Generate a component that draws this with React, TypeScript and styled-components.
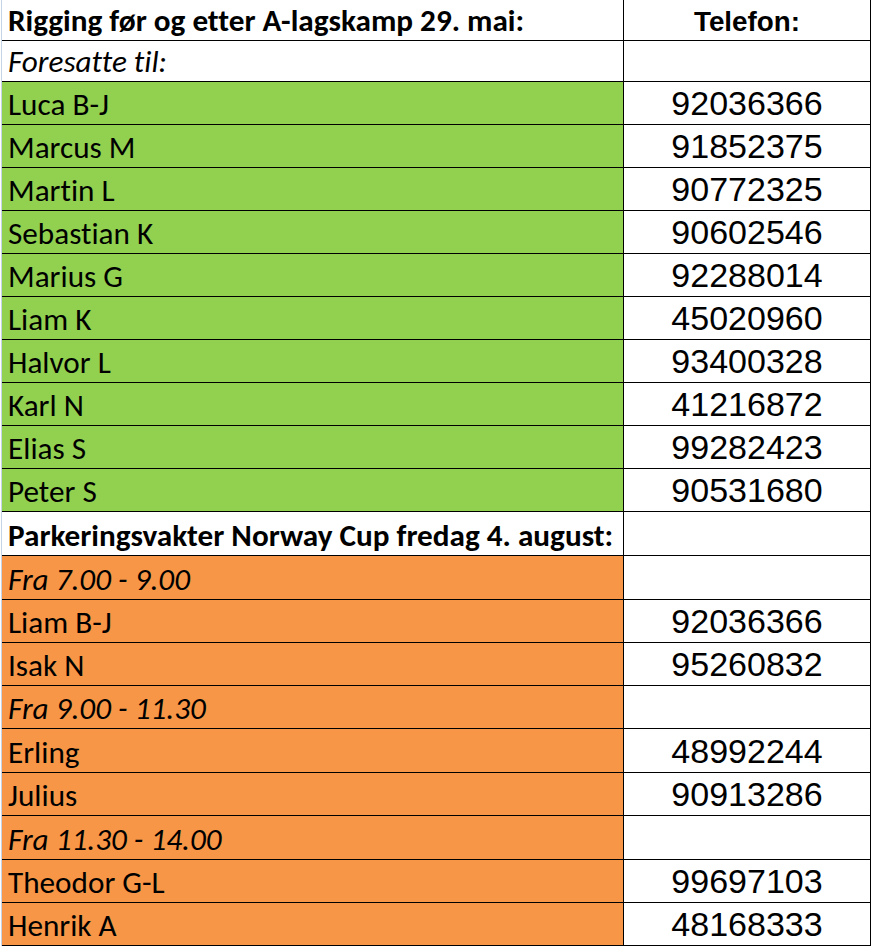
import React from "react";
import styled, { createGlobalStyle } from "styled-components";

const Global = createGlobalStyle`
  html, body { margin: 0; padding: 0; background: #ffffff; }
  body { font-family: "Carlito", "Lato", "Liberation Sans", sans-serif; }
`;

type Fill = "white" | "green" | "orange";
type Style = "bold" | "italic" | "plain";

interface Row {
  name: string;
  phone?: string;
  fill: Fill;
  style: Style;
  h: number;
}

const fills: Record<Fill, string> = {
  white: "#ffffff",
  green: "#92d050",
  orange: "#f79646",
};

const rows: Row[] = [
  { name: "Rigging før og etter A-lagskamp 29. mai:", phone: "Telefon:", fill: "white", style: "bold", h: 41 },
  { name: "Foresatte til:", fill: "white", style: "italic", h: 41 },
  { name: "Luca B-J", phone: "92036366", fill: "green", style: "plain", h: 43 },
  { name: "Marcus M", phone: "91852375", fill: "green", style: "plain", h: 43 },
  { name: "Martin L", phone: "90772325", fill: "green", style: "plain", h: 43 },
  { name: "Sebastian K", phone: "90602546", fill: "green", style: "plain", h: 43 },
  { name: "Marius G", phone: "92288014", fill: "green", style: "plain", h: 43 },
  { name: "Liam K", phone: "45020960", fill: "green", style: "plain", h: 43 },
  { name: "Halvor L", phone: "93400328", fill: "green", style: "plain", h: 43 },
  { name: "Karl N", phone: "41216872", fill: "green", style: "plain", h: 43 },
  { name: "Elias S", phone: "99282423", fill: "green", style: "plain", h: 43 },
  { name: "Peter S", phone: "90531680", fill: "green", style: "plain", h: 43 },
  { name: "Parkeringsvakter Norway Cup fredag 4. august:", fill: "white", style: "bold", h: 44 },
  { name: "Fra 7.00 - 9.00", fill: "orange", style: "italic", h: 44 },
  { name: "Liam B-J", phone: "92036366", fill: "orange", style: "plain", h: 43 },
  { name: "Isak N", phone: "95260832", fill: "orange", style: "plain", h: 43 },
  { name: "Fra 9.00 - 11.30", fill: "orange", style: "italic", h: 43 },
  { name: "Erling", phone: "48992244", fill: "orange", style: "plain", h: 44 },
  { name: "Julius", phone: "90913286", fill: "orange", style: "plain", h: 43 },
  { name: "Fra 11.30 - 14.00", fill: "orange", style: "italic", h: 44 },
  { name: "Theodor G-L", phone: "99697103", fill: "orange", style: "plain", h: 43 },
  { name: "Henrik A", phone: "48168333", fill: "orange", style: "plain", h: 43 },
];

const Sheet = styled.div`
  margin-left: 1px;
  border-left: 1px solid #c6d4e8;
  width: 869px;
`;

const Table = styled.div`
  display: grid;
  grid-template-columns: 622px 247px;
`;

const NameCell = styled.div<{ $fill: Fill; $style: Style; $h: number }>`
  box-sizing: border-box;
  height: ${(p) => p.$h}px;
  background: ${(p) => fills[p.$fill]};
  border-right: 1px solid #000;
  border-bottom: 1px solid #000;
  display: flex;
  align-items: flex-end;
  padding: 0 0 3px 6px;
  font-family: "Carlito", "Lato", "Liberation Sans", sans-serif;
  font-size: 31.2px;
  line-height: 34px;
  font-variant-ligatures: none;
  font-feature-settings: "liga" 0, "clig" 0;
  color: #000;
  white-space: nowrap;
  overflow: hidden;
  font-weight: ${(p) => (p.$style === "bold" ? 700 : 400)};
  font-style: ${(p) => (p.$style === "italic" ? "italic" : "normal")};
`;

const PhoneCell = styled.div<{ $head: boolean; $h: number }>`
  box-sizing: border-box;
  height: ${(p) => p.$h}px;
  background: #ffffff;
  border-right: 1px solid #000;
  border-bottom: 1px solid #000;
  display: flex;
  align-items: ${(p) => (p.$head ? "flex-end" : "center")};
  justify-content: center;
  padding-bottom: ${(p) => (p.$head ? "3px" : "0")};
  font-family: "Liberation Sans", Arial, sans-serif;
  font-size: ${(p) => (p.$head ? "27.8px" : "34px")};
  font-weight: ${(p) => (p.$head ? 700 : 400)};
  line-height: ${(p) => (p.$head ? "30px" : "36px")};
  color: #000;
`;

export default function App() {
  return (
    <>
      <Global />
      <Sheet>
        <Table>
          {rows.map((r, i) => (
            <React.Fragment key={i}>
              <NameCell $fill={r.fill} $style={r.style} $h={r.h}>
                {r.name}
              </NameCell>
              <PhoneCell $head={i === 0} $h={r.h}>
                {r.phone ?? ""}
              </PhoneCell>
            </React.Fragment>
          ))}
        </Table>
      </Sheet>
    </>
  );
}
